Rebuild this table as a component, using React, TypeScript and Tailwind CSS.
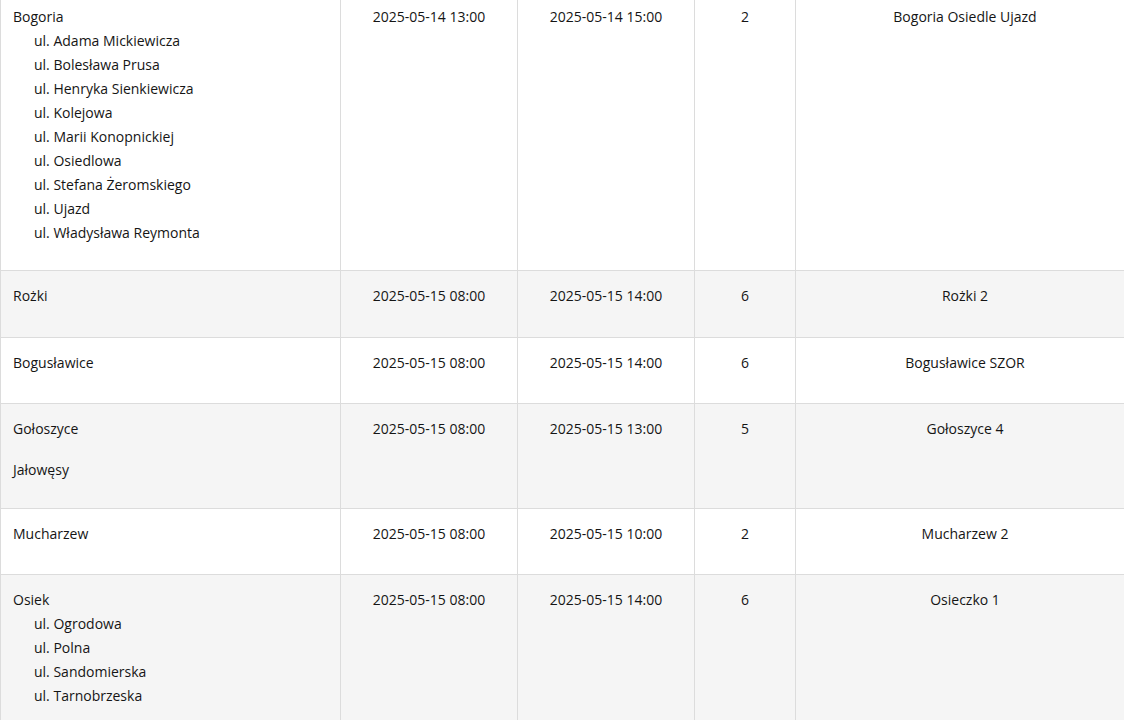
import React from "react";

type Row = {
    places: { name: string; streets?: string[] }[];
    start: string;
    end: string;
    hours: string;
    station: string;
};

const rows: Row[] = [
    {
        places: [
            {
                name: "Bogoria",
                streets: [
                    "ul. Adama Mickiewicza",
                    "ul. Bolesława Prusa",
                    "ul. Henryka Sienkiewicza",
                    "ul. Kolejowa",
                    "ul. Marii Konopnickiej",
                    "ul. Osiedlowa",
                    "ul. Stefana Żeromskiego",
                    "ul. Ujazd",
                    "ul. Władysława Reymonta",
                ],
            },
        ],
        start: "2025-05-14 13:00",
        end: "2025-05-14 15:00",
        hours: "2",
        station: "Bogoria Osiedle Ujazd",
    },
    { places: [{ name: "Rożki" }], start: "2025-05-15 08:00", end: "2025-05-15 14:00", hours: "6", station: "Rożki 2" },
    { places: [{ name: "Bogusławice" }], start: "2025-05-15 08:00", end: "2025-05-15 14:00", hours: "6", station: "Bogusławice SZOR" },
    {
        places: [{ name: "Gołoszyce" }, { name: "Jałowęsy" }],
        start: "2025-05-15 08:00",
        end: "2025-05-15 13:00",
        hours: "5",
        station: "Gołoszyce 4",
    },
    { places: [{ name: "Mucharzew" }], start: "2025-05-15 08:00", end: "2025-05-15 10:00", hours: "2", station: "Mucharzew 2" },
    {
        places: [
            {
                name: "Osiek",
                streets: ["ul. Ogrodowa", "ul. Polna", "ul. Sandomierska", "ul. Tarnobrzeska"],
            },
        ],
        start: "2025-05-15 08:00",
        end: "2025-05-15 14:00",
        hours: "6",
        station: "Osieczko 1",
    },
];

const App: React.FC = () => {
    return (
        <div className="w-[1124px] h-[720px] overflow-hidden bg-white font-['Open_Sans',sans-serif] text-[14px] leading-[24px] text-[#151515]">
            <table className="-mt-[9.5px] w-[1134px] table-fixed border-collapse">
                <colgroup>
                    <col className="w-[340px]" />
                    <col className="w-[177px]" />
                    <col className="w-[177px]" />
                    <col className="w-[101px]" />
                    <col className="w-[339px]" />
                </colgroup>
                <tbody>
                    {rows.map((row, i) => (
                        <tr key={i} className={i % 2 === 1 ? "bg-[#f5f5f5]" : "bg-white"}>
                            <td className="border border-[#dcdcdc] px-[12px] pt-[13px] pb-[25.5px] align-top">
                                <div className="flex min-h-[27px] flex-col gap-[17px]">
                                    {row.places.map((p) => (
                                        <div key={p.name}>
                                            <p>{p.name}</p>
                                            {p.streets && (
                                                <ul className="pl-[21px]">
                                                    {p.streets.map((s) => (
                                                        <li key={s}>{s}</li>
                                                    ))}
                                                </ul>
                                            )}
                                        </div>
                                    ))}
                                </div>
                            </td>
                            <td className="border border-[#dcdcdc] pt-[13px] text-center align-top">{row.start}</td>
                            <td className="border border-[#dcdcdc] pt-[13px] text-center align-top">{row.end}</td>
                            <td className="border border-[#dcdcdc] pt-[13px] text-center align-top">{row.hours}</td>
                            <td className="border border-[#dcdcdc] pt-[13px] text-center align-top">{row.station}</td>
                        </tr>
                    ))}
                </tbody>
            </table>
        </div>
    );
};

export default App;
